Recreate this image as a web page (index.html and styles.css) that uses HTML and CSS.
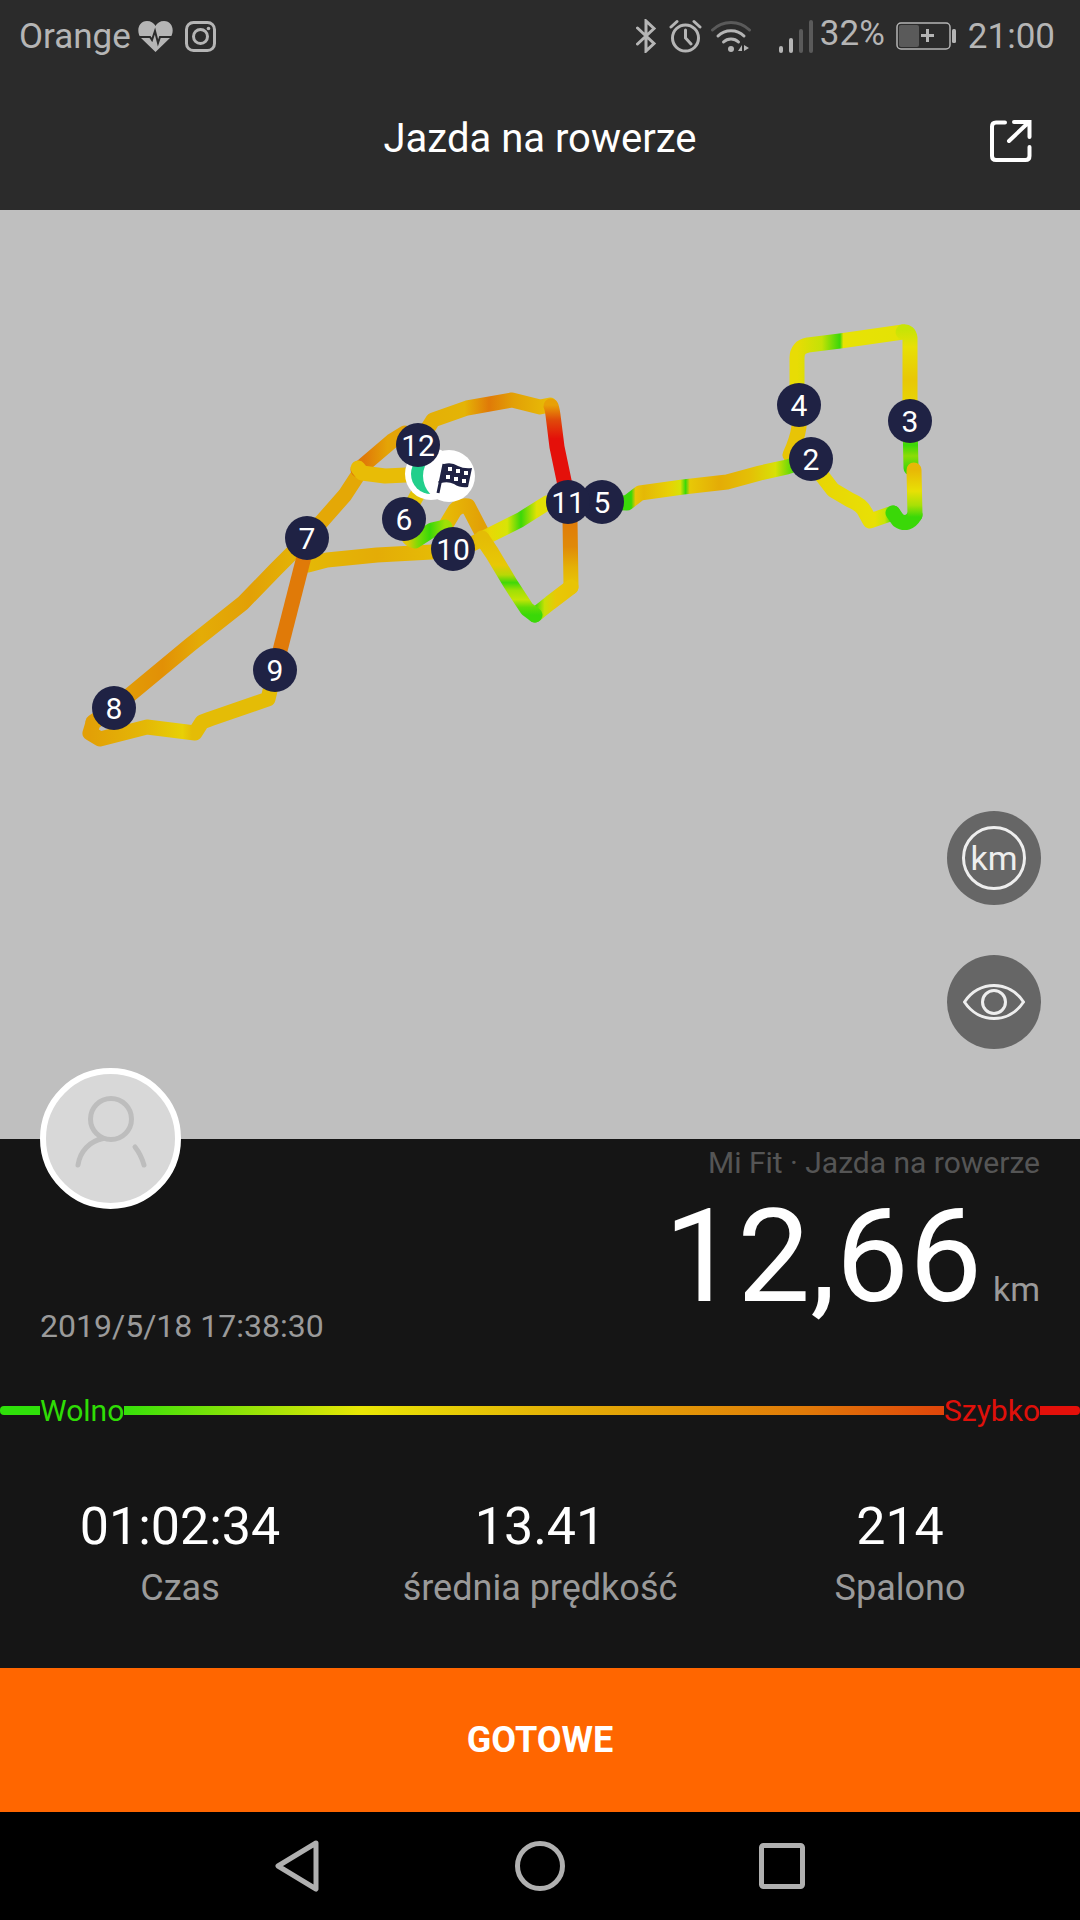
FILE: index.html
```html
<!DOCTYPE html>
<html lang="en">
<head>
    <meta charset="UTF-8">
    <meta name="viewport" content="width=device-width, initial-scale=1.0">
    <title>Jazda na rowerze</title>
    <link rel="stylesheet" href="styles.css">
</head>
<body>
    <div class="statusbar">
        <div class="status-left">
            <span class="carrier">Orange</span>
            <svg class="icon-heart" width="35" height="32" viewBox="0 0 35 32">
                <path class="solid" d="M17.5 32 L3 18 C-2 12 0 1 9 1 C13 1 16 3 17.5 6 C19 3 22 1 26 1 C35 1 37 12 32 18 Z"/>
                <path class="cut" d="M1 17 H12 L14 20 L17 11 L20 23 L22 17 H34"/>
            </svg>
            <svg class="icon-insta" width="31" height="31" viewBox="0 0 31 31">
                <rect class="line" x="1.5" y="1.5" width="28" height="28" rx="7"/>
                <circle class="line" cx="15.5" cy="15.5" r="7"/>
                <circle class="solid" cx="23.5" cy="7.5" r="1.8"/>
            </svg>
        </div>
        <div class="status-right">
            <svg class="gap-bt" width="21" height="34" viewBox="0 0 21 34">
                <path class="line" d="M1.5 9 L18 24.5 L10 32 V2 L18 9.5 L1.5 25"/>
            </svg>
            <svg class="gap-alarm" width="33" height="34" viewBox="0 0 33 34">
                <circle class="line" cx="16.5" cy="19" r="13"/>
                <path class="line" d="M16.5 11 V19 L22 25 M2 8 L8 2.5 M31 8 L25 2.5"/>
            </svg>
            <svg class="gap-wifi" width="40" height="33" viewBox="0 0 40 33">
                <path class="line dim" d="M1.5 10 C12 0 28 0 38.5 10"/>
                <path class="line" d="M7 16 C14 9 26 9 33 16 M12.5 22 C16.500 18 23.500 18 27.500 22"/>
                <circle class="solid" cx="20" cy="29" r="3"/>
                <path class="solid" d="M27 31 L31 25 V31 Z M33 25 L38 28 L33 31 Z"/>
            </svg>
            <svg class="gap-signal" width="34" height="33" viewBox="0 0 34 33">
                <rect class="solid" x="0" y="26" width="4" height="7" rx="2"/>
                <rect class="solid" x="10" y="18" width="4" height="15" rx="2"/>
                <rect class="faded" x="20" y="9" width="4" height="24" rx="2"/>
                <rect class="faded" x="30" y="0" width="4" height="33" rx="2"/>
            </svg>
            <span class="gap-pct">32%</span>
            <svg class="gap-batt" width="60" height="28" viewBox="0 0 60 28">
                <rect class="thin" x="1" y="1" width="53" height="26" rx="4"/>
                <rect class="faded" x="3" y="3" width="20" height="22" rx="2"/>
                <path class="solid" d="M25 12 H30 V7 H33 V12 H38 V15 H33 V20 H30 V15 H25 Z"/>
                <rect class="solid" x="56" y="7" width="4" height="14" rx="1.500"/>
            </svg>
            <span class="gap-time">21:00</span>
        </div>
    </div>

    <div class="header">
        <h1 class="title">Jazda na rowerze</h1>
        <svg class="share" width="42" height="42" viewBox="0 0 42 42">
            <path class="share-line" d="M15 2.500 H6 Q2 2.500 2 6.500 V36 Q2 40 6 40 H35.500 Q39.500 40 39.500 36 V27"/>
            <path class="share-line" d="M19 21 L39 2 M24 2 H39.500 V17"/>
        </svg>
    </div>

    <div class="map">
        <svg class="route" width="1080" height="929" viewBox="0 210 1080 929">
            <defs>
                <linearGradient id="g-top" gradientUnits="userSpaceOnUse" x1="797" y1="0" x2="910" y2="0">
                    <stop offset="0" stop-color="#e8dc05"/><stop offset=".22" stop-color="#c4e206"/>
                    <stop offset=".38" stop-color="#3ad808"/><stop offset=".41" stop-color="#e8e205"/>
                    <stop offset=".88" stop-color="#e4e205"/><stop offset="1" stop-color="#c8e406"/>
                </linearGradient>
                <linearGradient id="g-right" gradientUnits="userSpaceOnUse" x1="0" y1="330" x2="0" y2="470">
                    <stop offset="0" stop-color="#c8e406"/><stop offset=".12" stop-color="#e8e005"/>
                    <stop offset=".35" stop-color="#e8c806"/><stop offset=".65" stop-color="#e8dc05"/>
                    <stop offset=".82" stop-color="#3ad808"/><stop offset=".9" stop-color="#8cdc06"/>
                    <stop offset="1" stop-color="#3ad808"/>
                </linearGradient>
                <linearGradient id="g-right2" gradientUnits="userSpaceOnUse" x1="0" y1="470" x2="0" y2="517">
                    <stop offset="0" stop-color="#e8b806"/><stop offset=".45" stop-color="#e8e005"/>
                    <stop offset=".75" stop-color="#a8e006"/><stop offset="1" stop-color="#3ad808"/>
                </linearGradient>
                <linearGradient id="g-return" gradientUnits="userSpaceOnUse" x1="893" y1="0" x2="811" y2="0">
                    <stop offset="0" stop-color="#3ad808"/><stop offset=".1" stop-color="#c8e406"/>
                    <stop offset=".22" stop-color="#e8e005"/><stop offset="1" stop-color="#e8d405"/>
                </linearGradient>
                <linearGradient id="g-west" gradientUnits="userSpaceOnUse" x1="811" y1="0" x2="602" y2="0">
                    <stop offset=".07" stop-color="#3ad808"/><stop offset=".17" stop-color="#d8e006"/>
                    <stop offset=".29" stop-color="#e4c006"/><stop offset=".44" stop-color="#e4ac06"/>
                    <stop offset=".58" stop-color="#e8c806"/><stop offset=".6" stop-color="#3ad808"/>
                    <stop offset=".625" stop-color="#d8e206"/><stop offset=".68" stop-color="#e8d005"/>
                    <stop offset=".8" stop-color="#e4b806"/><stop offset=".84" stop-color="#e8c406"/>
                    <stop offset=".86" stop-color="#3ad808"/><stop offset="1" stop-color="#3ad808"/>
                </linearGradient>
                <linearGradient id="g-red" gradientUnits="userSpaceOnUse" x1="0" y1="405" x2="0" y2="480">
                    <stop offset="0" stop-color="#e8a006"/><stop offset=".2" stop-color="#e04a0a"/>
                    <stop offset=".45" stop-color="#e4100a"/><stop offset="1" stop-color="#e4100a"/>
                </linearGradient>
                <linearGradient id="g-hill" gradientUnits="userSpaceOnUse" x1="428" y1="0" x2="550" y2="0">
                    <stop offset="0" stop-color="#e4b006"/><stop offset=".3" stop-color="#e4b406"/>
                    <stop offset=".5" stop-color="#e07a08"/><stop offset=".7" stop-color="#e2a006"/>
                    <stop offset="1" stop-color="#e8bc06"/>
                </linearGradient>
                <linearGradient id="g-nw" gradientUnits="userSpaceOnUse" x1="358" y1="0" x2="400" y2="0">
                    <stop offset=".15" stop-color="#e07a08"/><stop offset=".7" stop-color="#e4a406"/>
                </linearGradient>
                <linearGradient id="g-long" gradientUnits="userSpaceOnUse" x1="114" y1="0" x2="307" y2="0">
                    <stop offset="0" stop-color="#e2a006"/><stop offset=".25" stop-color="#e29006"/>
                    <stop offset=".45" stop-color="#e4ac06"/><stop offset=".7" stop-color="#e2a006"/>
                    <stop offset="1" stop-color="#e4b806"/>
                </linearGradient>
                <linearGradient id="g-south" gradientUnits="userSpaceOnUse" x1="275" y1="0" x2="90" y2="0">
                    <stop offset="0" stop-color="#e4bc06"/><stop offset=".45" stop-color="#e4bc06"/>
                    <stop offset=".5" stop-color="#e8d005"/><stop offset=".7" stop-color="#e4b806"/>
                    <stop offset="1" stop-color="#e2a006"/>
                </linearGradient>
                <linearGradient id="g-mid" gradientUnits="userSpaceOnUse" x1="307" y1="0" x2="453" y2="0">
                    <stop offset="0" stop-color="#e4b806"/><stop offset=".48" stop-color="#e4ac06"/>
                    <stop offset="1" stop-color="#e6c006"/>
                </linearGradient>
                <linearGradient id="g-vee" gradientUnits="userSpaceOnUse" x1="443" y1="0" x2="482" y2="0">
                    <stop offset="0" stop-color="#e8bc06"/><stop offset="1" stop-color="#e2a006"/>
                </linearGradient>
                <linearGradient id="g-six" gradientUnits="userSpaceOnUse" x1="407" y1="0" x2="445" y2="0">
                    <stop offset="0" stop-color="#e4c806"/><stop offset=".3" stop-color="#7adc06"/>
                    <stop offset=".6" stop-color="#3ad808"/><stop offset="1" stop-color="#a0e006"/>
                </linearGradient>
                <linearGradient id="g-cross" gradientUnits="userSpaceOnUse" x1="470" y1="0" x2="568" y2="0">
                    <stop offset="0" stop-color="#e2b006"/><stop offset=".2" stop-color="#e8d805"/>
                    <stop offset=".38" stop-color="#d8e406"/><stop offset=".52" stop-color="#3ad808"/>
                    <stop offset=".68" stop-color="#e0e205"/><stop offset="1" stop-color="#e8d805"/>
                </linearGradient>
                <linearGradient id="g-down" gradientUnits="userSpaceOnUse" x1="0" y1="520" x2="0" y2="587">
                    <stop offset="0" stop-color="#e07a08"/><stop offset=".4" stop-color="#e08a08"/>
                    <stop offset=".7" stop-color="#e4b006"/><stop offset="1" stop-color="#e8c806"/>
                </linearGradient>
                <linearGradient id="g-bottom" gradientUnits="userSpaceOnUse" x1="571" y1="0" x2="527" y2="0">
                    <stop offset="0" stop-color="#e8c406"/><stop offset=".35" stop-color="#e8c806"/>
                    <stop offset=".6" stop-color="#c8e006"/><stop offset=".82" stop-color="#3ad808"/>
                </linearGradient>
                <linearGradient id="g-up" gradientUnits="userSpaceOnUse" x1="0" y1="615" x2="0" y2="538">
                    <stop offset="0" stop-color="#3ad808"/><stop offset=".1" stop-color="#60dc06"/>
                    <stop offset=".2" stop-color="#c4e406"/><stop offset=".32" stop-color="#a0e006"/>
                    <stop offset=".42" stop-color="#40d808"/><stop offset=".52" stop-color="#b8d806"/>
                    <stop offset=".65" stop-color="#e8c806"/><stop offset="1" stop-color="#e4bc06"/>
                </linearGradient>
            </defs>

            <!-- east loop -->
            <path class="track" stroke="url(#g-top)" d="M797 395 L797 358 Q797 347 808 345 L840 341 L903 332"/>
            <path class="track" stroke="url(#g-right)" d="M903 332 Q909 331 910 338 L910 421 L911 468"/>
            <path class="track" stroke="url(#g-return)" d="M893 513 L870 521 L865 512 Q862 505 850 500 L833 490 L823 477 L811 459"/>
            <path class="track" stroke="#3ad808" d="M915 515 Q908 527 898 520 L893 513"/>
            <path class="track" stroke="url(#g-right2)" d="M914 470 L915 515"/>
            <path class="track" stroke="#e8c406" d="M799 405 L799 427 Q797 440 790 455 L811 459"/>
            <path class="track" stroke="#e8c406" d="M820 470 Q829 458 815 450"/>
            <path class="track" stroke="url(#g-west)" d="M811 459 L787 467 L760 473 L727 482 L683 487 L640 493 L627 503 L602 502"/>

            <!-- middle -->
            <path class="track" stroke="url(#g-hill)" d="M428 428 L433 420 L467 408 L512 400 L540 407 L550 405"/>
            <path class="track" stroke="url(#g-red)" d="M551 406 Q552 408 553 415 L557 447 L566 490"/>
            <path class="track" stroke="url(#g-vee)" d="M443 530 L455 510 Q460 505 468 506 L482 533"/>
            <path class="track" stroke="url(#g-cross)" d="M568 502 L547 503 L520 520 L490 535 L470 545"/>
            <path class="track" stroke="url(#g-down)" d="M570 520 L571 587"/>
            <path class="track" stroke="url(#g-bottom)" d="M571 587 L550 603 L535 615"/>
            <path class="track" stroke="url(#g-up)" d="M535 615 L527 609 L510 583 L492 553 L482 538"/>

            <!-- west -->
            <path class="track" stroke="url(#g-long)" d="M93 722 L114 708 L190 645 L243 603 L275 570 L307 538"/>
            <path class="track" stroke="url(#g-south)" d="M275 670 L268 699 L210 719 L202 722 L195 733 L147 727 L100 739 L90 733 L93 723 L114 708"/>
            <path class="track" stroke="#e4a806" d="M307 538 L323 520 L345 495 L360 472"/>
            <path class="track" stroke="url(#g-nw)" d="M405 433 L392 441 L358 470"/>
            <path class="track" stroke="#e8bc06" d="M358 468 L362 473 L385 476 L428 474"/>
            <path class="track" stroke="url(#g-mid)" d="M308 565 L327 560 L377 555 L432 552 L453 548"/>
            <path class="track track-butt" stroke="#e07a08" d="M307 545 L275 670"/>
            <path class="track" stroke="#e4c406" d="M420 490 L404 519"/>
            <path class="track" stroke="url(#g-six)" d="M404 519 Q405 540 415 541 L432 530 L445 527"/>

            <!-- start and finish -->
            <circle class="pin-white" cx="431" cy="474" r="26"/>
            <circle class="pin-start" cx="431" cy="474" r="20"/>
            <circle class="pin-white" cx="449" cy="476" r="26"/>
            <path class="flag-pole" d="M444 464 L438 493 M439 483 L444 478"/>
            <path class="flag-cloth" d="M444 464 Q452 462 458 466 Q464 469 472 468 L468 487 Q460 488 454 484 Q448 481 441 483 Z"/>
            <path class="flag-check" d="M448 467 h4 v4 h-4z M456 469 h4 v4 h-4z M464 471 h4 v4 h-4z M446 475 h4 v4 h-4z M454 477 h4 v4 h-4z M462 479 h4 v4 h-4z"/>

            <!-- km markers -->
            <circle class="pin" cx="811" cy="459" r="22"/><text class="pin-label" x="811" y="470">2</text>
            <circle class="pin" cx="910" cy="421" r="22"/><text class="pin-label" x="910" y="432">3</text>
            <circle class="pin" cx="799" cy="405" r="22"/><text class="pin-label" x="799" y="416">4</text>
            <circle class="pin" cx="602" cy="502" r="22"/><text class="pin-label" x="602" y="513">5</text>
            <circle class="pin" cx="404" cy="519" r="22"/><text class="pin-label" x="404" y="530">6</text>
            <circle class="pin" cx="307" cy="538" r="22"/><text class="pin-label" x="307" y="549">7</text>
            <circle class="pin" cx="114" cy="708" r="22"/><text class="pin-label" x="114" y="719">8</text>
            <circle class="pin" cx="275" cy="670" r="22"/><text class="pin-label" x="275" y="681">9</text>
            <circle class="pin" cx="453" cy="549" r="22"/><text class="pin-label" x="453" y="560">10</text>
            <circle class="pin" cx="568" cy="502" r="22"/><text class="pin-label" x="568" y="513">11</text>
            <circle class="pin" cx="418" cy="445" r="22"/><text class="pin-label" x="418" y="456">12</text>
        </svg>

        <div class="map-buttons">
            <div class="round-button">
                <span class="km-badge">km</span>
            </div>
            <div class="round-button">
                <svg width="62" height="38" viewBox="0 0 62 38">
                    <path class="eye" d="M1.500 19 C16 -3 46 -3 60.500 19 C46 41 16 41 1.500 19 Z"/>
                    <circle class="eye" cx="31" cy="19" r="11.500"/>
                </svg>
            </div>
        </div>
    </div>

    <div class="panel">
        <div class="avatar">
            <svg width="80" height="80" viewBox="0 0 80 80">
                <circle class="avatar-line" cx="40" cy="25" r="20.500"/>
                <path class="avatar-line" d="M7 71 C9 57 19 47 32 44.500 M73 71 C71 64 68 58 64 53"/>
            </svg>
        </div>
        <div class="summary">
            <div class="date">2019/5/18 17:38:30</div>
            <div class="totals">
                <div class="source">Mi Fit · Jazda na rowerze</div>
                <div class="distance"><span class="distance-value">12,66</span><span class="distance-unit">km</span></div>
            </div>
        </div>
        <div class="speed-scale">
            <div class="scale-end scale-slow"></div>
            <span class="scale-label label-slow">Wolno</span>
            <div class="scale-mid"></div>
            <span class="scale-label label-fast">Szybko</span>
            <div class="scale-end scale-fast"></div>
        </div>
        <div class="stats">
            <div class="stat">
                <div class="stat-value">01:02:34</div>
                <div class="stat-label">Czas</div>
            </div>
            <div class="stat">
                <div class="stat-value">13.41</div>
                <div class="stat-label">średnia prędkość</div>
            </div>
            <div class="stat">
                <div class="stat-value">214</div>
                <div class="stat-label">Spalono</div>
            </div>
        </div>
    </div>

    <div class="done-button">GOTOWE</div>

    <div class="navbar">
        <svg width="46" height="52" viewBox="0 0 46 52">
            <path class="nav-line" d="M41 3 L3 26 L41 49 Z"/>
        </svg>
        <svg width="50" height="50" viewBox="0 0 50 50">
            <circle class="nav-line" cx="25" cy="25" r="22.500"/>
        </svg>
        <svg width="46" height="46" viewBox="0 0 46 46">
            <rect class="nav-line" x="2.500" y="2.500" width="41" height="41" rx="2"/>
        </svg>
    </div>
</body>
</html>
```

FILE: styles.css
```css
* {
    box-sizing: border-box;
}
body {
    font-family: Roboto, "Liberation Sans", sans-serif;
    margin: 0;
    width: 1080px;
    height: 1920px;
    display: flex;
    flex-direction: column;
    overflow: hidden;
    background-color: #000;
}

/* status bar */
.statusbar {
    height: 72px;
    flex-shrink: 0;
    display: flex;
    justify-content: space-between;
    align-items: center;
    padding: 0 25px 0 19px;
    background-color: #2b2b2b;
    color: #b5b5b5;
    font-size: 35px;
}
.status-left, .status-right {
    display: flex;
    align-items: center;
}
.statusbar svg {
    display: block;
}
.icon-heart {
    margin-left: 7px;
}
.icon-insta {
    margin-left: 12px;
}
.gap-alarm {
    margin-left: 12px;
}
.gap-wifi {
    margin-left: 9px;
}
.gap-signal {
    margin-left: 28px;
}
.gap-pct {
    margin-left: 7px;
    margin-top: -6px;
}
.gap-batt {
    margin-left: 11px;
}
.gap-time {
    margin-left: 12px;
}
.solid {
    fill: #b5b5b5;
}
.faded {
    fill: #5a5a5a;
}
.line {
    fill: none;
    stroke: #b5b5b5;
    stroke-width: 3;
    stroke-linecap: round;
}
.line.dim {
    stroke: #5a5a5a;
}
.thin {
    fill: none;
    stroke: #b5b5b5;
    stroke-width: 1.5;
}
.cut {
    fill: none;
    stroke: #2b2b2b;
    stroke-width: 2;
}

/* title */
.header {
    height: 138px;
    flex-shrink: 0;
    position: relative;
    display: flex;
    justify-content: center;
    align-items: center;
    background-color: #2b2b2b;
}
.title {
    margin: 0 0 6px;
    font-size: 40px;
    font-weight: 400;
    color: #fff;
}
.share {
    position: absolute;
    top: 48px;
    right: 48px;
}
.share-line {
    fill: none;
    stroke: #fff;
    stroke-width: 4;
    stroke-linecap: round;
    stroke-linejoin: miter;
}

/* map */
.map {
    height: 929px;
    flex-shrink: 0;
    position: relative;
    background-color: #bfbfbf;
}
.route {
    display: block;
}
.track {
    fill: none;
    stroke-width: 15;
    stroke-linecap: round;
    stroke-linejoin: round;
}
.track-butt {
    stroke-linecap: butt;
}
.pin {
    fill: #1f2244;
}
.pin-label {
    fill: #fff;
    font-size: 30px;
    text-anchor: middle;
}
.pin-white {
    fill: #fff;
}
.pin-start {
    fill: #22cf8c;
}
.flag-pole {
    fill: none;
    stroke: #1f2244;
    stroke-width: 3;
}
.flag-cloth {
    fill: #1f2244;
}
.flag-check {
    fill: #fff;
}
.map-buttons {
    position: absolute;
    top: 601px;
    right: 39px;
    display: flex;
    flex-direction: column;
    gap: 50px;
}
.round-button {
    width: 94px;
    height: 94px;
    border-radius: 50%;
    background-color: #666;
    display: flex;
    justify-content: center;
    align-items: center;
}
.km-badge {
    width: 64px;
    height: 64px;
    border: 3px solid #eee;
    border-radius: 50%;
    display: flex;
    justify-content: center;
    align-items: center;
    color: #eee;
    font-size: 34px;
    line-height: 1;
}
.eye {
    fill: none;
    stroke: #eee;
    stroke-width: 3;
}

/* panel under the map */
.panel {
    height: 529px;
    flex-shrink: 0;
    position: relative;
    background-color: #151515;
}
.avatar {
    position: absolute;
    top: -71px;
    left: 40px;
    width: 141px;
    height: 141px;
    border: 6px solid #fff;
    border-radius: 50%;
    background-color: #d8d8d8;
    display: flex;
    justify-content: center;
    align-items: center;
}
.avatar svg {
    margin-bottom: 10px;
}
.avatar-line {
    fill: none;
    stroke: #bdbdbd;
    stroke-width: 5;
    stroke-linecap: round;
}
.summary {
    height: 267px;
    padding: 0 40px;
    display: flex;
    justify-content: space-between;
    align-items: flex-end;
}
.date {
    margin-bottom: 60px;
    font-size: 32px;
    line-height: 40px;
    color: #9a9a9a;
}
.totals {
    margin-bottom: 67px;
    text-align: right;
}
.source {
    margin-bottom: 24px;
    font-size: 30px;
    line-height: 40px;
    color: #555;
}
.distance {
    display: flex;
    justify-content: flex-end;
    align-items: baseline;
    line-height: 100px;
}
.distance-value {
    font-family: "Liberation Sans Narrow", Roboto, sans-serif;
    font-size: 130px;
    color: #fff;
}
.distance-unit {
    margin-left: 11px;
    font-size: 34px;
    color: #9a9a9a;
}
.speed-scale {
    height: 9px;
    display: flex;
    align-items: center;
}
.scale-end {
    height: 9px;
    border-radius: 4px 0 0 4px;
}
.scale-slow {
    width: 40px;
    background-color: #2fe00a;
}
.scale-fast {
    width: 40px;
    border-radius: 0 4px 4px 0;
    background-color: #e4100a;
}
.scale-mid {
    flex: 1;
    height: 9px;
    background: linear-gradient(to right, #36e00a 0%, #e9e605 29%, #e4b406 51%, #e07a08 83%, #e0450a 100%);
}
.scale-label {
    font-size: 30px;
    line-height: 40px;
}
.label-slow {
    color: #2fdc05;
}
.label-fast {
    color: #e0100a;
}
.stats {
    padding-top: 82px;
    display: grid;
    grid-template-columns: repeat(3, 1fr);
    text-align: center;
}
.stat-value {
    font-size: 52px;
    line-height: 60px;
    color: #fff;
}
.stat-label {
    margin-top: 9px;
    font-size: 36px;
    line-height: 44px;
    color: #9a9a9a;
}

/* bottom */
.done-button {
    height: 144px;
    flex-shrink: 0;
    display: flex;
    justify-content: center;
    align-items: center;
    background-color: #ff6600;
    color: #fff;
    font-size: 36px;
    font-weight: 700;
}
.navbar {
    height: 108px;
    flex-shrink: 0;
    display: flex;
    justify-content: center;
    align-items: center;
    gap: 194px;
    background-color: #000;
}
.nav-line {
    fill: none;
    stroke: #b0b0b0;
    stroke-width: 5;
    stroke-linejoin: round;
}
```
